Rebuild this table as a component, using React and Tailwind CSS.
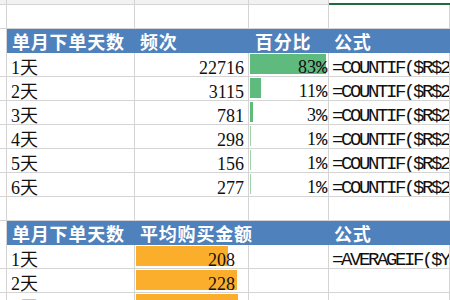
const serif = "font-['Liberation_Serif','Noto_Sans_CJK_SC',serif]";
const mono = "font-['Liberation_Mono','Noto_Sans_CJK_SC',monospace] text-[19px] tracking-[-2.4px]";
const cell = "border-b border-r border-[#d4d4d4]";
const grid = "grid grid-cols-[7px_128px_114px_80px_1fr]";

const freqRows = [
  { day: "1天", count: 22716, pct: 83, bar: 76 },
  { day: "2天", count: 3115, pct: 11, bar: 11 },
  { day: "3天", count: 781, pct: 3, bar: 3 },
  { day: "4天", count: 298, pct: 1, bar: 1 },
  { day: "5天", count: 156, pct: 1, bar: 1 },
  { day: "6天", count: 277, pct: 1, bar: 1 },
];

const avgRows = [
  { day: "1天", amount: 208, bar: 92, formula: "=AVERAGEIF($Y" },
  { day: "2天", amount: 228, bar: 101, formula: "" },
  { day: "3天", amount: 230, bar: 102, formula: "" },
];

function BlankRow() {
  return (
    <div className={`${grid} h-6`}>
      <div className={cell} />
      <div className={cell} />
      <div className={cell} />
      <div className={cell} />
      <div className={cell} />
    </div>
  );
}

function HeaderRow({ b, c, d }) {
  return (
    <div className={`${grid} h-6 text-white font-bold text-[18px] tracking-[0.8px] whitespace-nowrap font-['Noto_Sans_CJK_SC',sans-serif]`}>
      <div className="border-r border-[#d4d4d4] bg-white" />
      <div className="bg-[#4f81bd] flex items-center pl-[5px] leading-[20px]">单月下单天数</div>
      <div className="bg-[#4f81bd] flex items-center pl-[5px] leading-[20px] relative z-10">{b}</div>
      <div className="bg-[#4f81bd] flex items-center pl-[6px] leading-[20px]">{c}</div>
      <div className="bg-[#4f81bd] flex items-center pl-[5px] leading-[20px]">{d}</div>
    </div>
  );
}

function DataCell({ children, className = "" }) {
  return (
    <div className={`${cell} relative flex items-end leading-[16px] text-[18px] text-[#111] ${className}`}>
      {children}
    </div>
  );
}

export default function App() {
  return (
    <div className={`w-[450px] h-[300px] overflow-hidden bg-white ${serif}`}>
      {/* row above the tables, bottom edge of the selected cell */}
      <div className={`${grid} h-[5px]`}>
        <div className={`${cell} bg-[#f2f2f2]`} />
        <div className={`${cell} bg-[#f2f2f2]`} />
        <div className={`${cell} bg-[#f2f2f2]`} />
        <div className={`${cell} bg-[#f2f2f2]`} />
        <div className="bg-white border-b-2 border-[#1e6b41] mt-[-2px]" />
      </div>
      <BlankRow />

      <HeaderRow b="频次" c="百分比" d="公式" />
      {freqRows.map((r) => (
        <div key={r.day} className={`${grid} h-6`}>
          <DataCell />
          <DataCell className="pl-[4px]">{r.day}</DataCell>
          <DataCell className="justify-end pr-[4px]">{r.count}</DataCell>
          <DataCell className="justify-end pr-[3px]">
            <div
              className={`absolute left-[1px] top-[1px] h-[20px] ${r.bar > 1 ? "bg-[#5fba7d]" : "bg-[#9ed3ac]"}`}
              style={{ width: r.bar }}
            />
            <span className="relative">
              {r.pct}
              <span className={mono}>%</span>
            </span>
          </DataCell>
          <DataCell className="pl-[3px] whitespace-nowrap overflow-hidden">
            <span className={mono}>=COUNTIF($R$2</span>
          </DataCell>
        </div>
      ))}
      <BlankRow />

      <HeaderRow b="平均购买金额" c="" d="公式" />
      {avgRows.map((r) => (
        <div key={r.day} className={`${grid} h-6`}>
          <DataCell />
          <DataCell className="pl-[4px]">{r.day}</DataCell>
          <DataCell className="justify-end pr-[13px]">
            <div className="absolute left-[1px] top-[1px] h-[20px] bg-[#fbae2c]" style={{ width: r.bar }} />
            <span className="relative">{r.amount}</span>
          </DataCell>
          <DataCell />
          <DataCell className="pl-[3px] whitespace-nowrap overflow-hidden">
            <span className={mono}>{r.formula}</span>
          </DataCell>
        </div>
      ))}
    </div>
  );
}
